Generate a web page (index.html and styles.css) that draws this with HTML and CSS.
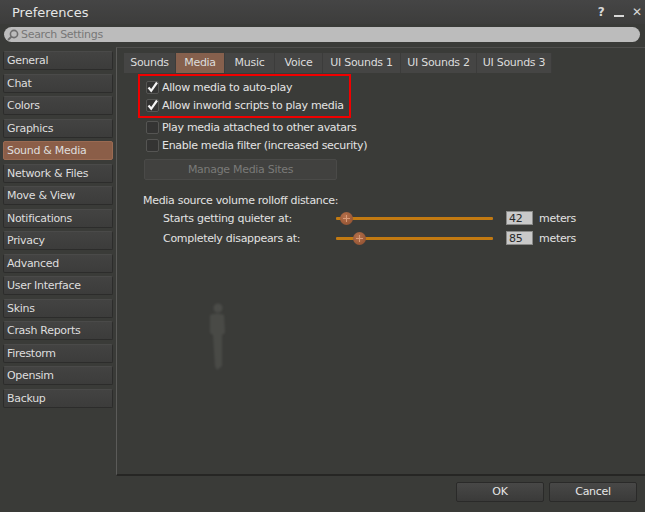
FILE: index.html
```html
<!DOCTYPE html>
<html lang="en">
<head>
  <meta charset="UTF-8">
  <title>Preferences</title>
  <link rel="stylesheet" href="styles.css">
</head>
<body>
  <div class="window">
    <div class="titlebar">
      <span class="title">Preferences</span>
      <div class="controls">
        <span class="ctl">?</span>
        <span class="ctl min"></span>
        <span class="ctl">&#x2715;</span>
      </div>
    </div>
    <div class="search">
      <svg class="glass" width="12" height="12" viewBox="0 0 12 12">
        <circle cx="7" cy="5" r="3.6" fill="none" stroke="#6e6e6e" stroke-width="1.6"/>
        <line x1="4.4" y1="7.6" x2="1" y2="11" stroke="#6e6e6e" stroke-width="2"/>
      </svg>
      <span class="placeholder">Search Settings</span>
    </div>
    <div class="main">
      <div class="sidebar">
        <div class="nav">General</div>
        <div class="nav">Chat</div>
        <div class="nav">Colors</div>
        <div class="nav">Graphics</div>
        <div class="nav active">Sound &amp; Media</div>
        <div class="nav">Network &amp; Files</div>
        <div class="nav">Move &amp; View</div>
        <div class="nav">Notifications</div>
        <div class="nav">Privacy</div>
        <div class="nav">Advanced</div>
        <div class="nav">User Interface</div>
        <div class="nav">Skins</div>
        <div class="nav">Crash Reports</div>
        <div class="nav">Firestorm</div>
        <div class="nav">Opensim</div>
        <div class="nav">Backup</div>
      </div>
      <div class="panel">
        <div class="tabs">
          <div class="tab t-sounds">Sounds</div>
          <div class="tab t-media active">Media</div>
          <div class="tab t-music">Music</div>
          <div class="tab t-voice">Voice</div>
          <div class="tab t-ui1">UI Sounds 1</div>
          <div class="tab t-ui2">UI Sounds 2</div>
          <div class="tab t-ui3">UI Sounds 3</div>
        </div>
        <div class="highlight">
          <div class="check-row">
            <span class="box">
              <svg width="13" height="13" viewBox="0 0 13 13"><path d="M2.5 6.5 L5.2 9.8 L11 1.5" fill="none" stroke="#f4f4f4" stroke-width="2.2"/></svg>
            </span>Allow media to auto-play
          </div>
          <div class="check-row">
            <span class="box">
              <svg width="13" height="13" viewBox="0 0 13 13"><path d="M2.5 6.5 L5.2 9.8 L11 1.5" fill="none" stroke="#f4f4f4" stroke-width="2.2"/></svg>
            </span>Allow inworld scripts to play media
          </div>
        </div>
        <div class="check-row indent"><span class="box"></span>Play media attached to other avatars</div>
        <div class="check-row indent"><span class="box"></span>Enable media filter (increased security)</div>
        <div class="btn disabled">Manage Media Sites</div>
        <div class="section-label">Media source volume rolloff distance:</div>
        <div class="slider-row">
          <span class="slider-label">Starts getting quieter at:</span>
          <div class="track"><span class="thumb thumb-1"></span></div>
          <span class="value">42</span>
          <span class="unit">meters</span>
        </div>
        <div class="slider-row">
          <span class="slider-label">Completely disappears at:</span>
          <div class="track"><span class="thumb thumb-2"></span></div>
          <span class="value">85</span>
          <span class="unit">meters</span>
        </div>
        <svg class="ghost" width="24" height="72" viewBox="0 0 24 72">
          <circle cx="13" cy="6" r="4.5" fill="#52534f"/>
          <path d="M5 13 Q12 10 19 13 L20 31 L17 33 L17 64 L12 68 L10 64 L8 33 L5 31 Z" fill="#50514d"/>
        </svg>
      </div>
    </div>
    <div class="footer">
      <div class="btn footer-btn">OK</div>
      <div class="btn footer-btn">Cancel</div>
    </div>
  </div>
</body>
</html>
```

FILE: styles.css
```css
body {
    margin: 0;
    background-color: #3a3b38;
    font-family: "DejaVu Sans", sans-serif;
    font-size: 11px;
    letter-spacing: -0.3px;
    color: #e2e2e2;
}
.window {
    width: 645px;
    height: 512px;
    overflow: hidden;
    background-color: #3a3b38;
}
.titlebar {
    height: 24px;
    display: flex;
    align-items: center;
    justify-content: space-between;
    background: linear-gradient(#454545, #3d3d3c);
}
.title {
    margin-left: 12px;
    font-size: 13px;
    letter-spacing: 0;
    color: #e6e6e6;
}
.controls {
    display: flex;
    align-items: center;
    gap: 8px;
    margin-right: 3px;
}
.ctl {
    width: 10px;
    text-align: center;
    font-size: 12px;
    font-weight: bold;
    color: #d8d8d8;
}
.min {
    height: 2px;
    margin-top: 8px;
    background: #d8d8d8;
}
.search {
    margin: 3px 5px 0 4px;
    height: 15px;
    border-radius: 8px;
    background-color: #bcbcbc;
    display: flex;
    align-items: center;
    gap: 2px;
    padding-left: 3px;
}
.placeholder {
    color: #777777;
}
.main {
    display: flex;
    margin-top: 5px;
    height: 429px;
}
.sidebar {
    width: 116px;
    padding-top: 4px;
    box-sizing: border-box;
}
.nav {
    margin-left: 3px;
    width: 110px;
    height: 19px;
    margin-bottom: 3.5px;
    box-sizing: border-box;
    padding-left: 3px;
    line-height: 18px;
    background: linear-gradient(#434342, #3c3c3b);
    border: 1px solid #2c2c2b;
    border-top-color: #4a4a49;
    border-radius: 2px;
    color: #dedede;
}
.nav.active {
    background: #8b5e48;
    border-color: #9a6a52;
}
.panel {
    flex: 1;
    position: relative;
    border-left: 1px solid #5b5b59;
    border-top: 1px solid #4e4e4c;
    border-bottom: 2px solid #262624;
    padding: 5px 0 0 7px;
}
.tabs {
    display: flex;
    height: 20px;
}
.tab {
    box-sizing: border-box;
    text-align: center;
    line-height: 20px;
    background-color: #454544;
    border-right: 1px solid #3c3c3b;
    color: #dcdcdc;
}
.tab.active {
    background-color: #86604d;
}
.t-sounds { width: 52px; }
.t-media { width: 49px; }
.t-music { width: 50px; }
.t-voice { width: 48px; }
.t-ui1 { width: 78px; }
.t-ui2 { width: 76px; }
.t-ui3 { width: 75px; }
.highlight {
    width: 203px;
    margin: 1px 0 0 14px;
    border: 2px solid #f00000;
    padding: 2px 0 2px 6px;
}
.check-row {
    height: 18px;
    display: flex;
    align-items: center;
    color: #e4e4e4;
}
.check-row.indent {
    margin-left: 22px;
}
.box {
    width: 13px;
    height: 13px;
    margin-right: 3px;
    box-sizing: border-box;
    background-color: #343433;
    border: 1px solid #555553;
    border-radius: 2px;
    display: flex;
    align-items: center;
    justify-content: center;
}
.box svg {
    flex: none;
}
.btn {
    box-sizing: border-box;
    text-align: center;
    border-radius: 2px;
    background: linear-gradient(#484847, #3a3a39);
    border: 1px solid #2a2a29;
    color: #e6e6e6;
}
.btn.disabled {
    width: 193px;
    height: 21px;
    line-height: 19px;
    margin: 5px 0 0 20px;
    background: #41413f;
    border-color: #4a4a48;
    color: #7a7a78;
}
.section-label {
    margin: 14px 0 0 19px;
    height: 14px;
    line-height: 14px;
}
.slider-row {
    display: flex;
    align-items: center;
    height: 20px;
    margin-left: 39px;
}
.slider-label {
    width: 173px;
}
.track {
    position: relative;
    width: 157px;
    height: 3px;
    background-color: #c27a12;
    border-radius: 1px;
}
.thumb {
    position: absolute;
    top: -5px;
    width: 13px;
    height: 13px;
    border-radius: 50%;
    background: radial-gradient(circle at 40% 35%, #b5714c, #8a4b2c);
}
.thumb::before, .thumb::after {
    content: "";
    position: absolute;
    background: #d89a78;
}
.thumb::before {
    left: 6px;
    top: 3px;
    width: 1px;
    height: 7px;
}
.thumb::after {
    left: 3px;
    top: 6px;
    width: 7px;
    height: 1px;
}
.thumb-1 { left: 4px; }
.thumb-2 { left: 17px; }
.value {
    margin-left: 13px;
    width: 27px;
    height: 14px;
    box-sizing: border-box;
    padding-left: 2px;
    line-height: 13px;
    background-color: #c9c9c9;
    border: 1px solid #8a8a88;
    color: #2a2a2a;
}
.unit {
    margin-left: 6px;
}
.ghost {
    position: absolute;
    left: 88px;
    top: 254px;
    filter: blur(1.2px);
    opacity: 0.7;
}
.footer {
    display: flex;
    justify-content: flex-end;
    gap: 5px;
    padding: 6px 8px 0 0;
}
.footer-btn {
    width: 88px;
    height: 20px;
    line-height: 18px;
}
```
